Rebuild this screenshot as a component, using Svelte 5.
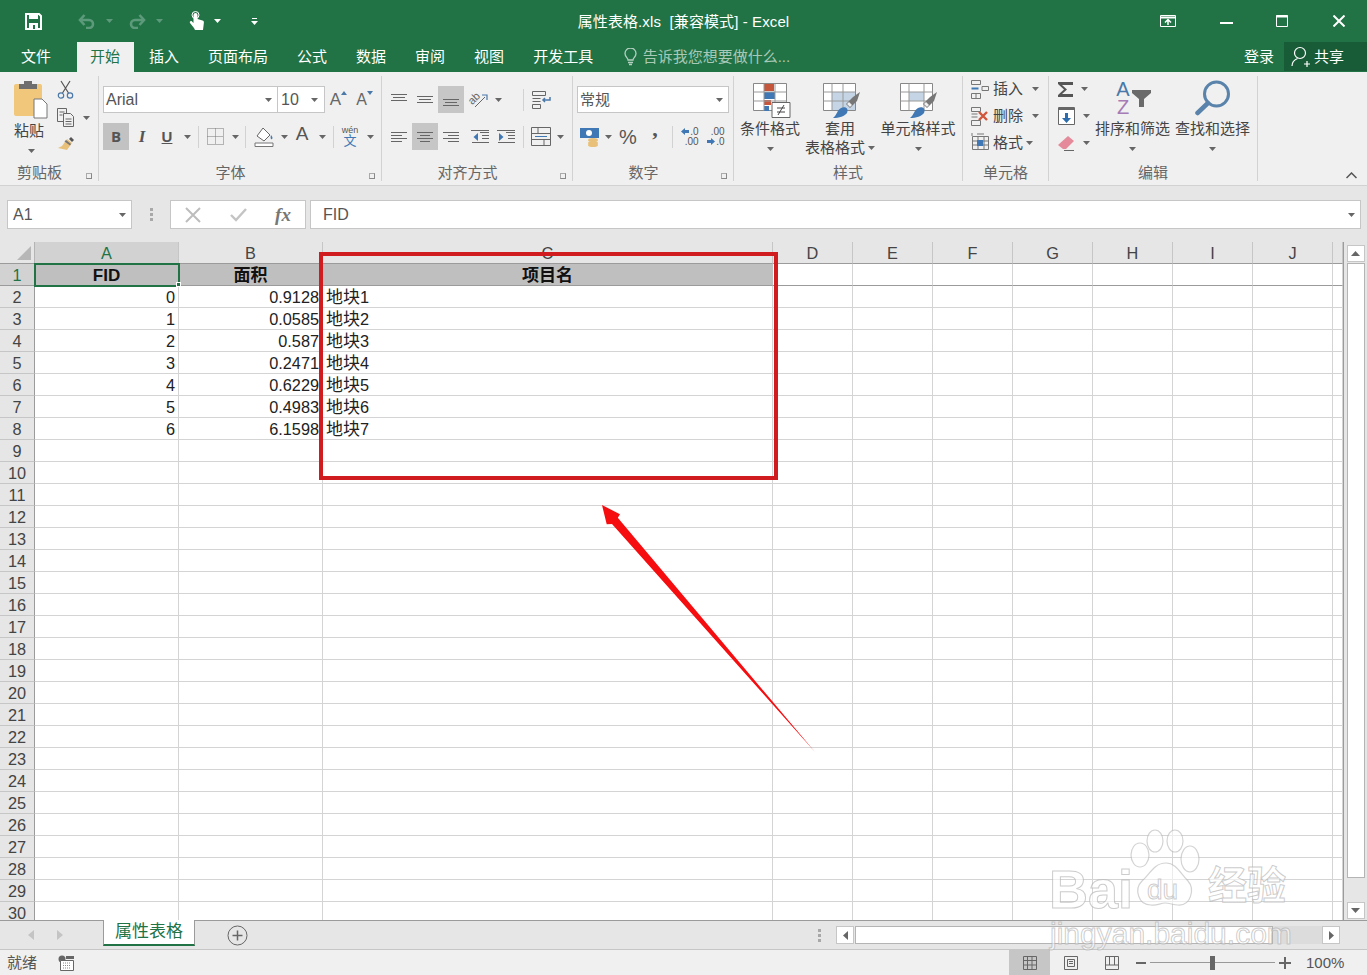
<script>
  const cols = ['A','B','C','D','E','F','G','H','I','J',''];
  const rows = Array.from({ length: 30 }, (_, i) => i + 1);
  const data = [
    ['0','0.9128','1'],['1','0.0585','2'],['2','0.587','3'],['3','0.2471','4'],
    ['4','0.6229','5'],['5','0.4983','6'],['6','6.1598','7']
  ];
  const tabs = ['插入','页面布局','公式','数据','审阅','视图','开发工具'];
  function cell(r, c) {
    if (r === 1) return ['FID','面积','项目名'][c] ?? '';
    return data[r - 2]?.[c] ?? '';
  }
</script>

{#snippet caret()}
  <svg class="caret" width="7" height="4" viewBox="0 0 7 4"><path d="M0 0h7L3.5 4z" fill="#666"/></svg>
{/snippet}
{#snippet sep()}
  <span class="vsep"></span>
{/snippet}
{#snippet lines(kind)}
  <svg width="18" height="14" viewBox="0 0 18 14" fill="none" stroke="#666">
    {#if kind === 'l'}<path d="M1 2.5h16M1 5.5h11M1 8.5h16M1 11.5h11"/>
    {:else if kind === 'c'}<path d="M1 2.5h16M4 5.5h10M1 8.5h16M4 11.5h10"/>
    {:else}<path d="M1 2.5h16M6 5.5h11M1 8.5h16M6 11.5h11"/>{/if}
  </svg>
{/snippet}
{#snippet brush()}
  <path d="M37 9 34 18 27 25 23 21 30 14z" fill="#777"/><path d="M26 19l3 3-2 2-3-3z" fill="#f0f0f0"/>
  <path d="M18 25c5-2 8 1 6 5-2 3-8 5-14 5 4-3 4-8 8-10z" fill="#3f78b4"/>
{/snippet}

<div class="app">
  <header class="title">
    <div class="qat">
      <svg class="q-save" width="17" height="17" viewBox="0 0 17 17"><path d="M1 1h13l2 2v13H1z" fill="none" stroke="#fff" stroke-width="2"/><path d="M4 1h9v5H4zM4 10h9v6H4z" fill="#fff"/><path d="M8 12h2v4H8z" fill="#217346"/></svg>
      <svg class="q-undo" width="18" height="15" viewBox="0 0 18 15" fill="none" stroke="#5d9a7b" stroke-width="2.6"><path d="M2 6h9a4 4 0 0 1 0 8H8"/><path d="M6.5 1 2 6l4.500 5"/></svg>
      <svg class="q-c1" width="7" height="4" viewBox="0 0 7 4"><path d="M0 0h7L3.500 4z" fill="#5d9a7b"/></svg>
      <svg class="q-redo" width="18" height="15" viewBox="0 0 18 15" fill="none" stroke="#5d9a7b" stroke-width="2.6"><path d="M16 6H7a4 4 0 0 0 0 8h3"/><path d="M11.500 1 16 6l-4.500 5"/></svg>
      <svg class="q-c2" width="7" height="4" viewBox="0 0 7 4"><path d="M0 0h7L3.500 4z" fill="#5d9a7b"/></svg>
      <svg class="q-touch" width="16" height="20" viewBox="0 0 16 20"><path d="M5 17 1 12c-.8-1.500 1-2.500 2-1.500l1.500 1.500V4a2 2 0 0 1 4 0v4l5 1.500c1 .4 1.500 1 1.400 2L14 19H6z" fill="#fff"/><circle cx="6.500" cy="4" r="3.500" fill="none" stroke="#fff"/></svg>
      <svg class="q-c3" width="7" height="4" viewBox="0 0 7 4"><path d="M0 0h7L3.500 4z" fill="#fff"/></svg>
      <svg class="q-more" width="7" height="8" viewBox="0 0 7 8"><path d="M1 1h5v1H1zM0 4h7L3.500 8z" fill="#fff"/></svg>
    </div>
    <div class="doc">属性表格.xls&nbsp; [兼容模式] - Excel</div>
    <div class="win">
      <svg width="16" height="12" viewBox="0 0 16 12" fill="none" stroke="#fff"><path d="M.5.500h15v11H.500z"/><path d="M.5 2.500h15" stroke-width="2"/><path d="M8 10V5M5 7.500l3-3 3 3" stroke-width="1.500"/></svg>
      <svg width="13" height="12" viewBox="0 0 13 12"><path d="M0 7h13v2H0z" fill="#fff"/></svg>
      <svg width="12" height="12" viewBox="0 0 12 12" fill="none" stroke="#fff"><path d="M.5.500h11v11H.500z"/><path d="M0 1.500h12" stroke-width="2"/></svg>
      <svg width="12" height="12" viewBox="0 0 12 12" stroke="#fff" stroke-width="2"><path d="M.5.500l11 11M11.500.500l-11 11"/></svg>
    </div>
  </header>

  <nav class="tabs">
    <div class="tab file">文件</div>
    <div class="tab on">开始</div>
    {#each tabs as t}<div class="tab">{t}</div>{/each}
    <div class="tell">
      <svg width="13" height="18" viewBox="0 0 13 18" fill="none" stroke="#b4cfc0" stroke-width="1.300"><path d="M4 12c0-2-3-3-3-6.500a5.500 5.500 0 0 1 11 0C12 9 9 10 9 12z"/><path d="M4 14.500h5M5 16.500h3"/></svg>
      <span>告诉我您想要做什么...</span>
    </div>
    <div class="login">登录</div>
    <div class="share">
      <svg width="20" height="22" viewBox="0 0 20 22" fill="none" stroke="#fff" stroke-width="1.200"><circle cx="9" cy="7" r="5.500"/><path d="M1 20c0-4 3-6.500 5.500-7.500M13 18h6M16 15v6"/></svg>
      <span>共享</span>
    </div>
  </nav>

  <section class="ribbon">
    <div class="g g-clip">
      <div class="gb clipb">
        <div class="bigcol paste">
          <svg width="34" height="38" viewBox="0 0 34 38"><rect x="0" y="3" width="28" height="32" rx="2" fill="#f0c77b"/><path d="M5 3h18v5H5z" fill="#6e6e6e"/><path d="M10 0h8v4h-8z" fill="#6e6e6e"/><path d="M20 18h8l5 5v14H20z" fill="#fff" stroke="#777"/></svg>
          <span class="lb">粘贴</span>
          <div class="cdown">{@render caret()}</div>
        </div>
        <div class="clipside">
          <svg width="17" height="19" viewBox="0 0 17 19" fill="none" stroke="#555" stroke-width="1.200"><path d="M4 1l7.500 12M13 1 5.500 13"/><circle cx="4" cy="15.500" r="2.700" stroke="#4a78a8"/><circle cx="13" cy="15.500" r="2.700" stroke="#4a78a8"/></svg>
          <div class="copy"><svg width="18" height="19" viewBox="0 0 18 19" fill="#f0f0f0" stroke="#666"><path d="M.5.500h9v13h-9z"/><path d="M6.500 5.500h7l3 3v10h-10z"/><path d="M2.500 4h5M2.500 7h3M8.500 11h6M8.500 13.500h6M8.500 16h6"/></svg>{@render caret()}</div>
          <svg width="18" height="16" viewBox="0 0 18 16"><path d="M10 3l5 4-5 7-9-2 4-2z" fill="#e9c079"/><path d="M12 3l2-2 3 3-2 2z" fill="#555"/><path d="M9 4l5 4-1 1.500L7.500 5.500z" fill="#777"/></svg>
        </div>
      </div>
      <div class="gl launcher"><span>剪贴板</span><span class="launch"></span></div>
    </div>

    <div class="g g-font">
      <div class="gb stack">
        <div class="r font1">
          <div class="combo"><span>Arial</span>{@render caret()}</div>
          <div class="combo sz"><span>10</span>{@render caret()}</div>
          <span class="growa">A<svg width="6" height="4" viewBox="0 0 6 4"><path d="M3 0l3 4H0z" fill="#4a78a8"/></svg></span>
          <span class="growa small">A<svg width="6" height="4" viewBox="0 0 6 4"><path d="M3 4l3-4H0z" fill="#4a78a8"/></svg></span>
        </div>
        <div class="r font2">
          <b class="fb act">B</b>
          <i class="fi">I</i>
          <u class="fu">U</u>
          {@render caret()}
          {@render sep()}
          <svg width="17" height="17" viewBox="0 0 17 17" fill="none" stroke="#777" stroke-dasharray="1 1"><path d="M.5.500h16v16H.500zM8.500.500v16M.5 8.500h16"/></svg>
          {@render caret()}
          {@render sep()}
          <svg width="20" height="20" viewBox="0 0 20 20"><path d="M9 1l7 7-6 6-7-5z" fill="#fff" stroke="#666"/><path d="M17 8c1.500 2 2 3 1 4s-2-1-1-4z" fill="#4a78a8"/><path d="M1 16h18v3.500H1z" fill="#fff" stroke="#777"/></svg>
          {@render caret()}
          <span class="fa">A</span>
          {@render caret()}
          {@render sep()}
          <span class="wen"><small>wén</small>文</span>
          {@render caret()}
        </div>
      </div>
      <div class="gl launcher"><span>字体</span><span class="launch"></span></div>
    </div>

    <div class="g g-align">
      <div class="gb stack">
        <div class="r al1">
          <svg width="18" height="14" viewBox="0 0 18 14" fill="none" stroke="#666"><path d="M1 1.500h16M3 4.500h12M1 7.500h16"/></svg>
          <svg width="18" height="14" viewBox="0 0 18 14" fill="none" stroke="#666"><path d="M1 3.500h16M3 6.500h12M1 9.500h16"/></svg>
          <span class="abox"><svg width="18" height="14" viewBox="0 0 18 14" fill="none" stroke="#666"><path d="M1 6.500h16M3 9.500h12M1 12.500h16"/></svg></span>
          <span class="orient"><span class="ab">ab</span><svg width="20" height="18" viewBox="0 0 20 18" fill="none"><path d="M7 16 17 6" stroke="#666"/><path d="M14 4h5v5" stroke="#4a78a8" stroke-width="1.200"/></svg></span>
          {@render caret()}
          <span></span>
          {@render sep()}
          <svg width="20" height="18" viewBox="0 0 20 18" fill="none" stroke="#666"><path d="M.5.500h13v4H.500zM.5 7.500h8M.5 10.500h8M.5 13.500h8v4H.500z"/><path d="M18 6v3h-7M13 7l-2 2 2 2" stroke="#4a78a8" stroke-width="1.500"/></svg>
        </div>
        <div class="r al2">
          {@render lines('l')}
          <span class="abox">{@render lines('c')}</span>
          {@render lines('r')}
          <svg width="19" height="16" viewBox="0 0 19 16" fill="none" stroke="#666"><path d="M9 3.500h9M11 6.500h7M11 9.500h7M1 13.500h17M0 1.500h18" /><path d="M7 4 2.500 8 7 12z" fill="#3f78b4" stroke="none"/></svg>
          <svg width="19" height="16" viewBox="0 0 19 16" fill="none" stroke="#666"><path d="M9 3.500h9M11 6.500h7M11 9.500h7M1 13.500h17M0 1.500h18"/><path d="M2 4l4.500 4L2 12z" fill="#3f78b4" stroke="none"/></svg>
          <span></span>
          {@render sep()}
          <svg width="20" height="19" viewBox="0 0 20 19" fill="none" stroke="#666"><path d="M.5.500h19v18H.500zM.5 6.500h19M.5 12.500h19M7 .500v6M13 12.500v6"/><path d="M4 9.500h12" stroke="#3f78b4"/></svg>
          {@render caret()}
        </div>
      </div>
      <div class="gl launcher"><span>对齐方式</span><span class="launch"></span></div>
    </div>

    <div class="g g-num">
      <div class="gb stack">
        <div class="r num1"><div class="combo wide"><span>常规</span>{@render caret()}</div></div>
        <div class="r num2">
          <svg width="20" height="20" viewBox="0 0 20 20"><path d="M0 1h19v10H0z" fill="#3f78b4"/><circle cx="9" cy="6" r="3" fill="#fff"/><ellipse cx="13" cy="13" rx="5" ry="2" fill="#e9c079"/><ellipse cx="13" cy="16" rx="5" ry="2" fill="#e9c079"/><ellipse cx="13" cy="18" rx="5" ry="2" fill="#e9c079"/></svg>
          {@render caret()}
          <span class="pct">%</span>
          <span class="cma">,</span>
          {@render sep()}
          <span class="dec"><small><svg width="8" height="7" viewBox="0 0 8 7"><path d="M4 0v2h4v3H4v2L0 3.500z" fill="#3f78b4"/></svg>.0</small><small>.00</small></span>
          <span class="dec"><small>.00</small><small><svg width="8" height="7" viewBox="0 0 8 7"><path d="M4 0v2H0v3h4v2l4-3.500z" fill="#3f78b4"/></svg>.0</small></span>
        </div>
      </div>
      <div class="gl launcher"><span>数字</span><span class="launch"></span></div>
    </div>

    <div class="g g-sty">
      <div class="gb sty">
        <div class="bigcol c1">
          <svg width="38" height="36" viewBox="0 0 38 36"><path d="M.5.500h33v27H.500z" fill="#fff" stroke="#888"/><path d="M11 1h10v7H11z" fill="#c5563c"/><path d="M11 9h11v7H11z" fill="#3f78b4"/><path d="M11 17h7v5h-7z" fill="#c5563c"/><path d="M11 23h5v5h-5z" fill="#3f78b4"/><path d="M11 .500v27M22 .500v27M.5 9h33M.5 18h33" stroke="#999" fill="none"/><path d="M19 19.500h18v15H19z" fill="#fff" stroke="#666"/><path d="M24 25h8M24 29h8M31 22l-6 10" stroke="#444" fill="none"/></svg>
          <span class="lb">条件格式</span>
          <div class="cdown">{@render caret()}</div>
        </div>
        <div class="bigcol c2">
          <svg width="38" height="36" viewBox="0 0 38 36"><path d="M.5.500h32v27H.500z" fill="#fff" stroke="#888"/><path d="M9 9h23v18H9z" fill="#c5d5e6"/><path d="M9 .500v27M20 .500v27M.5 9h32M.5 18h32" stroke="#999" fill="none"/>{@render brush()}</svg>
          <span class="lb">套用</span>
          <span class="lb t2">表格格式{@render caret()}</span>
        </div>
        <div class="bigcol c3">
          <svg width="38" height="36" viewBox="0 0 38 36"><path d="M.5.500h32v27H.500z" fill="#fff" stroke="#888"/><path d="M9 9h15v9H9z" fill="#c5d5e6"/><path d="M.5 9h32M.5 18h32M9 .500v27M24 .500v27" stroke="#999" fill="none"/>{@render brush()}</svg>
          <span class="lb">单元格样式</span>
          <div class="cdown">{@render caret()}</div>
        </div>
      </div>
      <div class="gl"><span>样式</span></div>
    </div>

    <div class="g g-cell">
      <div class="gb cellb">
        <div class="ci"><svg width="18" height="19" viewBox="0 0 18 19" fill="none" stroke="#777"><path d="M.5.500h9v4h-9zM.5 13.500h9v5h-9zM5 13.500v5M11 6.500h6.500v4H11z"/><path d="M.5 8.500h7" stroke="#3f78b4" stroke-width="2"/></svg><span>插入</span><span class="cc i1">{@render caret()}</span></div>
        <div class="ci"><svg width="18" height="19" viewBox="0 0 18 19" fill="none" stroke="#777"><path d="M.5.500h9v4h-9zM.5 13.500h9v5h-9zM.5 7h6M.5 10h6"/><path d="M8 5l8 8M16 5l-8 8" stroke="#d0553a" stroke-width="2.400"/></svg><span>删除</span><span class="cc i1">{@render caret()}</span></div>
        <div class="ci"><svg width="18" height="20" viewBox="0 0 18 20" fill="none" stroke="#777"><path d="M1.500 3.500h16v13h-16zM1 0v3M6 1h7M1.500 8h16M1.500 12h16M7 3.500v13M13 3.500v13"/><path d="M6 7h6v6H6z" fill="#3f78b4" stroke="none"/></svg><span>格式</span><span class="cc i2">{@render caret()}</span></div>
      </div>
      <div class="gl"><span>单元格</span></div>
    </div>

    <div class="g g-edit">
      <div class="gb editb">
        <div class="edsm">
          <div class="ei"><svg width="15" height="15" viewBox="0 0 15 15"><path d="M0 0h15v3H4l5 4.500L4 12h11v3H0v-2l6-5.500L0 2z" fill="#555"/></svg>{@render caret()}</div>
          <div class="ei"><svg width="17" height="18" viewBox="0 0 17 18"><path d="M.5.500h16v17H.500z" fill="#fff" stroke="#666"/><path d="M0 1h17v2H0z" fill="#666"/><path d="M7 6h3v5h3l-4.500 5L4 11h3z" fill="#2d6cad"/></svg>{@render caret()}</div>
          <div class="ei"><svg width="17" height="17" viewBox="0 0 17 17"><path d="M10 1l6 5-8 8H5L0 10z" fill="#e58a9a"/><path d="M6 15h10v1H6z" fill="#666"/></svg>{@render caret()}</div>
        </div>
        <div class="bigcol e1">
          <div class="az"><span class="za"><em class="a">A</em><em class="z">Z</em></span><svg width="19" height="17" viewBox="0 0 19 17"><path d="M0 0h19v3l-7 6v8H7V9L0 3z" fill="#6a6a6a"/></svg></div>
          <span class="lb">排序和筛选</span>
          <div class="cdown">{@render caret()}</div>
        </div>
        <div class="bigcol e2">
          <svg width="36" height="36" viewBox="0 0 36 36" fill="none"><circle cx="21.500" cy="14" r="12" stroke="#5983ab" stroke-width="3"/><path d="M2.500 33 13 23" stroke="#5983ab" stroke-width="4.500" stroke-linecap="round"/></svg>
          <span class="lb">查找和选择</span>
          <div class="cdown">{@render caret()}</div>
        </div>
      </div>
      <div class="gl"><span>编辑</span></div>
    </div>

    <svg class="collapse" width="11" height="7" viewBox="0 0 11 7" fill="none" stroke="#555" stroke-width="1.500"><path d="M.5 6l5-5 5 5"/></svg>
  </section>

  <section class="fbar">
    <div class="name"><span>A1</span>{@render caret()}</div>
    <div class="dots"><i></i><i></i><i></i></div>
    <div class="fbtns">
      <svg width="16" height="16" viewBox="0 0 16 16" stroke="#bdbdbd" stroke-width="2"><path d="M1 1l14 14M15 1 1 15"/></svg>
      <svg width="17" height="14" viewBox="0 0 17 14" fill="none" stroke="#c4c4c4" stroke-width="2.400"><path d="M1 7l5 5L16 1"/></svg>
      <span class="fx">fx</span>
    </div>
    <div class="finput"><span>FID</span>{@render caret()}</div>
  </section>

  <section class="sheetarea">
    <div class="grid">
      <div class="corner"><svg width="14" height="14" viewBox="0 0 14 14"><path d="M14 0v14H0z" fill="#b7b7b7"/></svg></div>
      {#each cols as c, i}<div class="ch" class:sel={i === 0}>{c}</div>{/each}
      {#each rows as r}
        <div class="rh" class:sel={r === 1} class:first={r === 1}>{r}</div>
        {#each cols as _, c}
          <div class="cl" class:hd={r === 1 && c < 3} class:first={r === 1} class:num={r > 1 && c < 2} class:active={r === 1 && c === 0}>{#if c === 2 && r > 1 && r < 9}<span class="cj">地块</span>{/if}{cell(r, c)}</div>
        {/each}
      {/each}
    </div>
    <div class="vscroll">
      <div class="sbtn"><svg width="9" height="5" viewBox="0 0 9 5"><path d="M4.500 0 9 5H0z" fill="#666"/></svg></div>
      <div class="vthumb"></div>
      <div class="sbtn"><svg width="9" height="5" viewBox="0 0 9 5"><path d="M4.500 5 9 0H0z" fill="#666"/></svg></div>
    </div>
  </section>

  <section class="sheettabs">
    <svg class="nav1" width="6" height="10" viewBox="0 0 6 10"><path d="M6 0v10L0 5z" fill="#c4c4c4"/></svg>
    <svg class="nav2" width="6" height="10" viewBox="0 0 6 10"><path d="M0 0v10l6-5z" fill="#c4c4c4"/></svg>
    <div class="stab">属性表格</div>
    <svg class="plus" width="21" height="21" viewBox="0 0 21 21" fill="none" stroke="#666"><circle cx="10.500" cy="10.500" r="9.500"/><path d="M10.500 5.500v10M5.500 10.500h10" stroke-width="1.500"/></svg>
    <div class="dots hd"><i></i><i></i><i></i></div>
    <div class="hscroll">
      <div class="hbtn"><svg width="5" height="9" viewBox="0 0 5 9"><path d="M5 0v9L0 4.500z" fill="#666"/></svg></div>
      <div class="hthumb"></div>
      <div class="htrack"></div>
      <div class="hbtn"><svg width="5" height="9" viewBox="0 0 5 9"><path d="M0 0v9l5-4.500z" fill="#666"/></svg></div>
    </div>
  </section>

  <footer class="status">
    <span class="ready">就绪</span>
    <svg class="macro" width="16" height="16" viewBox="0 0 16 16"><circle cx="4" cy="4" r="3.500" fill="#666"/><path d="M2.500 5.500h13v10h-13z" fill="#fff" stroke="#666"/><path d="M8 1h8v3H8z" fill="#666"/><path d="M5 8h8M5 10.500h8M5 13h8" stroke="#888" stroke-dasharray="1 1"/></svg>
    <div class="views">
      <div class="vw on"><svg width="14" height="14" viewBox="0 0 14 14" fill="none" stroke="#666"><path d="M.5.500h13v13H.500zM.5 4.500h13M.5 9h13M4.500.500v13M9 .500v13"/></svg></div>
      <div class="vw"><svg width="14" height="14" viewBox="0 0 14 14" fill="none" stroke="#666"><path d="M.5.500h13v13H.500zM3.500 3.500h7v7h-7zM5 5.500h4M5 7.500h4"/></svg></div>
      <div class="vw"><svg width="14" height="14" viewBox="0 0 14 14" fill="none" stroke="#666"><path d="M.5.500h13v13H.500zM.5 9h13M4.500.500V9M9.500.500V9"/></svg></div>
    </div>
    <div class="zoombar">
      <span class="zm"></span>
      <div class="slider"><span></span></div>
      <svg width="12" height="12" viewBox="0 0 12 12"><path d="M0 5h12v2H0zM5 0h2v12H5z" fill="#666"/></svg>
    </div>
    <span class="pc">100%</span>
  </footer>

  <div class="redbox"></div>
  <svg class="arrow" width="240" height="270" viewBox="0 0 240 270"><path d="M2 5 20 14.300 17.800 17.800 215 252 12 24 6.700 24.300z" fill="#f50d10"/></svg>

  <div class="wm" aria-hidden="true">
    <span class="bai">Bai</span>
    <span class="jy">经验</span>
    <span class="url">jingyan.baidu.com</span>
    <svg class="paw" width="78" height="82" viewBox="0 0 78 82" fill="rgba(255,255,255,.55)" stroke="rgba(175,175,175,.55)" stroke-width="1.200"><ellipse cx="12" cy="26" rx="9" ry="12"/><ellipse cx="27" cy="12" rx="8" ry="11"/><ellipse cx="47" cy="12" rx="8" ry="11"/><ellipse cx="62" cy="30" rx="9" ry="13"/><path d="M38 34c10 0 14 10 22 18 7 8 3 25-10 24-5 0-8-2-13-2s-8 3-14 2C10 76 6 60 14 52c8-7 12-18 24-18z"/></svg>
    <span class="du">du</span>
  </div>
</div>

<style>
  :global(body) { margin: 0; background: #fff; }
  .app {
    position: relative; width: 1367px; height: 975px; overflow: hidden;
    display: flex; flex-direction: column;
    font-family: "Liberation Sans", "Noto Sans CJK SC", sans-serif;
    color: #444;
  }
  svg { display: block; flex: none; }

  .title { height: 42px; background: #217346; position: relative; display: flex; align-items: center; flex: none; }
  .qat { display: flex; align-items: center; padding-left: 25px; height: 100%; }
  .q-undo { margin-left: 36px; } .q-c1 { margin-left: 10px; }
  .q-redo { margin-left: 15px; } .q-c2 { margin-left: 10px; }
  .q-touch { margin-left: 26px; } .q-c3 { margin-left: 9px; }
  .q-more { margin-left: 30px; }
  .doc { position: absolute; left: 0; right: 0; text-align: center; font-size: 15px; letter-spacing: .1px; color: #fff; line-height: 43px; }
  .win { margin-left: auto; display: flex; align-items: center; padding-right: 22px; }
  .win svg:nth-child(1) { margin-right: 44px; }
  .win svg:nth-child(2) { margin-right: 43px; }
  .win svg:nth-child(3) { margin-right: 45px; }

  .tabs { height: 30px; background: #217346; display: flex; flex: none; gap: 2px; color: #fff; font-size: 15px; line-height: 30px; }
  .tab { padding: 0 13.5px; white-space: nowrap; }
  .tab.file { margin-left: 7.500px; margin-right: 10px; }
  .tab.on { background: #f0f0f0; color: #217346; }
  .tell { margin-left: 15px; display: flex; align-items: center; gap: 6px; color: #a9c9b7; white-space: nowrap; }
  .login { margin-left: auto; margin-right: 8px; }
  .share { width: 83px; height: 29px; background: #185c37; display: flex; align-items: center; gap: 3px; padding-left: 7px; box-sizing: border-box; }

  .ribbon { height: 114px; flex: none; background: #f0f0f0; border-bottom: 1px solid #d2d2d2; box-sizing: border-box; display: flex; position: relative; font-size: 15px; line-height: 20px; }
  .g { margin-top: 4px; height: 105px; display: flex; flex-direction: column; border-right: 1px solid #d2d2d2; box-sizing: border-box; }
  .g-clip { width: 99px; } .g-font { width: 283px; } .g-align { width: 191px; } .g-num { width: 161px; } .g-sty { width: 229px; } .g-cell { width: 86px; } .g-edit { width: 209px; }
  .gb { flex: 1; min-height: 0; }
  .gl { height: 18px; position: relative; text-align: center; font-size: 15px; line-height: 18px; color: #666; margin-bottom: -1px; flex: none; }
  .gl.launcher { padding-right: 19px; }
  .launch { position: absolute; right: 6px; top: 9px; width: 6px; height: 6px; border: 1px solid #888; border-top-color: #aaa; border-left-color: #aaa; box-sizing: border-box; }

  .bigcol { display: flex; flex-direction: column; align-items: center; padding-top: 5px; }
  .lb { white-space: nowrap; display: flex; align-items: center; gap: 3px; }
  .cdown { height: 19px; display: flex; align-items: center; }
  .caret { align-self: center; justify-self: center; }

  .clipb { display: flex; padding-left: 14px; }
  .paste { width: 34px; } .paste .lb { margin-top: 2px; align-self: flex-start; }
  .clipside { margin-left: 9px; padding-top: 4px; display: flex; flex-direction: column; }
  .copy { margin-top: 9px; margin-bottom: 9px; display: flex; align-items: center; gap: 8px; }

  .stack { padding: 10px 0 0 4px; display: flex; flex-direction: column; gap: 10px; }
  .r { display: grid; height: 27px; align-items: center; justify-items: center; }
  .font1 { grid-template-columns: 175px 47px 27px 25px; }
  .font2 { grid-template-columns: 26px 26px 24px 16px 6px 28px 12px 8px 30px 10px 26px 14px 8px 26px 14px; }
  .combo { box-sizing: border-box; height: 27px; width: 100%; background: #fff; border: 1px solid #c6c6c6; display: flex; align-items: center; justify-content: space-between; padding: 0 5px 0 2px; font-size: 16px; color: #555; }
  .combo.sz { border-left: 0; padding-left: 3px; padding-right: 6px; }
  .combo.wide { font-size: 15px; }
  .growa { font-size: 17px; color: #666; position: relative; display: flex; align-items: flex-start; }
  .growa.small { font-size: 16px; }
  .growa svg { margin-top: 1px; }
  .fb, .fi, .fu { font-size: 15px; line-height: 27px; width: 100%; text-align: center; color: #555; }
  .fb { background: #c2c2c2; font-weight: 700; font-family: "Open Sans", "Liberation Sans", sans-serif; }
  .fi { font-family: "Liberation Serif", serif; font-weight: 700; font-size: 17px; }
  .fu { font-weight: 700; }
  .vsep { display: block; width: 1px; height: 22px; background: #d2d2d2; }
  .fa { font-size: 19px; line-height: 20px; color: #555; margin-top: -6px; }
  .wen { display: flex; flex-direction: column; align-items: center; color: #3f78b4; font-size: 13px; line-height: 12px; }
  .wen small { font-size: 9px; line-height: 9px; color: #555; font-family: "Liberation Sans", sans-serif; }

  .al1 { grid-template-columns: 26px 26px 26px 28px 12px 16px 6px 32px; }
  .al2 { grid-template-columns: 26px 26px 26px 32px 20px 4px 6px 30px 8px; }
  .abox { width: 100%; height: 27px; background: #c6c6c6; display: flex; align-items: center; justify-content: center; }
  .orient { position: relative; display: block; width: 20px; height: 18px; }
  .ab { position: absolute; left: 0; top: 2px; font-size: 11px; line-height: 11px; color: #666; transform: rotate(-45deg); }

  .num1 { grid-template-columns: 152px; }
  .num2 { grid-template-columns: 26px 10px 30px 24px 10px 26px 26px; }
  .pct { font-size: 20px; color: #555; }
  .cma { font-size: 22px; font-weight: 700; line-height: 18px; margin-top: -16px; color: #555; font-family: "Liberation Serif", serif; }
  .dec { display: flex; flex-direction: column; align-items: flex-end; color: #555; }
  .dec small { font-size: 10px; line-height: 10px; display: flex; align-items: center; gap: 1px; }

  .sty { display: flex; }
  .bigcol.c1 { width: 72px; } .bigcol.c2 { width: 68px; } .bigcol.c3 { width: 88px; }
  .sty .bigcol > svg { margin-top: 2px; }
  .bigcol.c1 > svg, .bigcol.c2 > svg { margin-left: 3px; }
  .bigcol.c3 > svg { margin-left: 2px; }
  .sty .t2 { margin-top: -1px; } 

  .cellb { padding: 1px 0 0 8px; display: flex; flex-direction: column; gap: 3px; }
  .ci { height: 24px; display: flex; align-items: center; gap: 4px; white-space: nowrap; }
  .cc { display: block; } .cc.i1 { margin-left: 5px; } .cc.i2 { margin-left: -1px; }

  .editb { display: flex; }
  .edsm { width: 46px; box-sizing: border-box; padding: 1px 0 0 9px; display: flex; flex-direction: column; gap: 3px; }
  .ei { height: 24px; display: flex; align-items: center; gap: 8px; }
  .bigcol.e1 { width: 75px; margin-right: 5px; } .bigcol.e2 { width: 75px; }
  .az { display: flex; align-items: center; height: 36px; gap: 2px; margin: -1px 0 3px 2px; }
  .za { display: flex; flex-direction: column; align-items: center; }
  .za em { font-style: normal; font-size: 20px; line-height: 18px; }
  .za .a { color: #4a78a8; } .za .z { color: #a67bb6; }
  .e2 > svg { margin-top: -1px; margin-bottom: 3px; }
  .collapse { position: absolute; right: 10px; bottom: 6px; }

  .fbar { height: 56px; flex: none; background: #e6e6e6; display: flex; padding: 14px 6px 13px 7px; box-sizing: border-box; align-items: stretch; }
  .name, .fbtns, .finput { background: #fff; border: 1px solid #c6c6c6; box-sizing: border-box; align-items: center; }
  .name, .finput { display: flex; }
  .name { width: 125px; justify-content: space-between; padding: 0 5px 0 5px; font-size: 16px; color: #555; }
  .dots { width: 38px; display: flex; flex-direction: column; align-items: center; justify-content: center; gap: 2px; }
  .dots i { width: 3px; height: 3px; background: #a8a8a8; display: block; }
  .fbtns { width: 136px; display: grid; grid-template-columns: 44px 46px 44px; justify-items: center; }
  .fx { font-family: "Liberation Serif", serif; font-style: italic; font-weight: 700; font-size: 19px; color: #777; }
  .finput { margin-left: 4px; flex: 1; justify-content: space-between; padding: 0 5px 0 12px; font-size: 16px; color: #555; }

  .sheetarea { height: 678px; flex: none; display: flex; overflow: hidden; background: #e6e6e6; }
  .grid { width: 1343px; height: 678px; overflow: hidden; display: grid; background: #fff; grid-template-columns: 35px 144px 144px 450px repeat(7, 80px) 10px; grid-auto-rows: 22px; align-content: start; font-size: 16.300px; border-right: 1px solid #9b9b9b; box-sizing: content-box; }
  .corner { background: #e6e6e6; border-right: 1px solid #b4b4b4; border-bottom: 1px solid #9b9b9b; box-sizing: border-box; display: flex; justify-content: flex-end; align-items: flex-end; padding: 0 3px 3px 0; }
  .ch { background: #e6e6e6; border-right: 1px solid #c6c6c6; border-bottom: 1px solid #9b9b9b; text-align: center; line-height: 22px; box-sizing: border-box; color: #444; }
  .ch.sel { background: #d2d2d2; color: #217346; }
  .rh { background: #e6e6e6; border-right: 1px solid #9b9b9b; border-bottom: 1px solid #c6c6c6; text-align: center; line-height: 22px; box-sizing: border-box; color: #444; }
  .rh.sel { background: #d2d2d2; color: #217346; }
  .rh.first { border-bottom-color: #9b9b9b; }
  .cl { border-right: 1px solid #d4d4d4; border-bottom: 1px solid #d4d4d4; line-height: 22px; padding: 0 3px; box-sizing: border-box; white-space: nowrap; overflow: hidden; color: #222; position: relative; }
  .cl.first { border-bottom-color: #9b9b9b; }
  .cl.num { text-align: right; }
  .cl.hd { background: #bfbfbf; text-align: center; font-weight: 700; font-size: 17px; line-height: 23px; color: #111; border-right-color: #bfbfbf; }
  .cj { font-size: 17px; }
  .cl.active { overflow: visible; outline: 2px solid #217346; outline-offset: -1px; z-index: 2; }
  .cl.active::after { content: ""; position: absolute; right: -3px; bottom: -2px; width: 5px; height: 5px; background: #217346; border: 1px solid #fff; box-sizing: border-box; }
  .vscroll { flex: 1; display: flex; flex-direction: column; align-items: center; padding-top: 3px; background: #e6e6e6; box-sizing: border-box; }
  .sbtn { width: 18px; height: 17px; background: #fff; border: 1px solid #c6c6c6; box-sizing: border-box; display: flex; align-items: center; justify-content: center; flex: none; }
  .vthumb { width: 18px; height: 615px; margin: 1px 0 24px; background: #fff; border: 1px solid #b4b4b4; box-sizing: border-box; flex: none; }

  .sheettabs { height: 30px; flex: none; box-sizing: border-box; border-top: 1px solid #9b9b9b; border-bottom: 1px solid #c6c6c6; background: #e6e6e6; display: flex; align-items: center; }
  .nav1 { margin-left: 28px; } .nav2 { margin-left: 23px; }
  .stab { margin-left: 40px; width: 90px; height: 24px; align-self: flex-start; margin-top: -1px; background: #fff; border: 1px solid #9b9b9b; border-top: 0; border-bottom: 2px solid #217346; box-sizing: content-box; text-align: center; font-size: 17px; line-height: 24px; color: #217346; }
  .plus { margin-left: 32px; }
  .dots.hd { width: 8px; margin-left: 567px; }
  .hscroll { margin-left: 13px; width: 504px; height: 18px; display: flex; align-self: center; }
  .hbtn { width: 18px; height: 18px; background: #fff; border: 1px solid #c6c6c6; box-sizing: border-box; display: flex; align-items: center; justify-content: center; flex: none; }
  .hthumb { width: 418px; background: #fff; border: 1px solid #b4b4b4; box-sizing: border-box; margin-left: 1px; flex: none; }
  .htrack { flex: 1; background: #dcdcdc; }

  .status { flex: 1; min-height: 0; background: #f0f0f0; display: flex; align-items: center; position: relative; font-size: 15px; color: #555; }
  .ready { margin-left: 7px; line-height: 25px; }
  .macro { margin-left: 21px; }
  .views { margin-left: 935px; display: flex; height: 100%; }
  .vw { width: 41px; display: flex; align-items: center; justify-content: center; }
  .vw.on { background: #c6c6c6; }
  .zoombar { display: flex; align-items: center; margin-left: 4px; }
  .zm { width: 10px; height: 2px; background: #666; }
  .slider { width: 125px; height: 1px; background: #999; margin: 0 4px; position: relative; }
  .slider span { position: absolute; left: 60px; top: -6px; width: 5px; height: 14px; background: #666; }
  .pc { margin-left: 15px; font-size: 15px; }

  .redbox { position: absolute; left: 319px; top: 252px; width: 459px; height: 228px; border: 4px solid #d01c1f; box-sizing: border-box; }
  .arrow { position: absolute; left: 600px; top: 500px; }

  .wm { position: absolute; left: 1040px; top: 820px; width: 327px; height: 140px; pointer-events: none; }
  .wm span { position: absolute; color: rgba(255,255,255,.6); -webkit-text-stroke: 1px rgba(170,170,170,.6); white-space: nowrap; line-height: 1; }
  .bai { left: 9px; top: 42px; font-size: 54px; font-weight: 700; }
  .jy { left: 168px; top: 46px; font-size: 39px; font-weight: 700; }
  .url { left: 10px; top: 99px; font-size: 30px; }
  .du { left: 107px; top: 56px; font-size: 28px; }
  .paw { position: absolute; left: 88px; top: 9px; }
</style>
